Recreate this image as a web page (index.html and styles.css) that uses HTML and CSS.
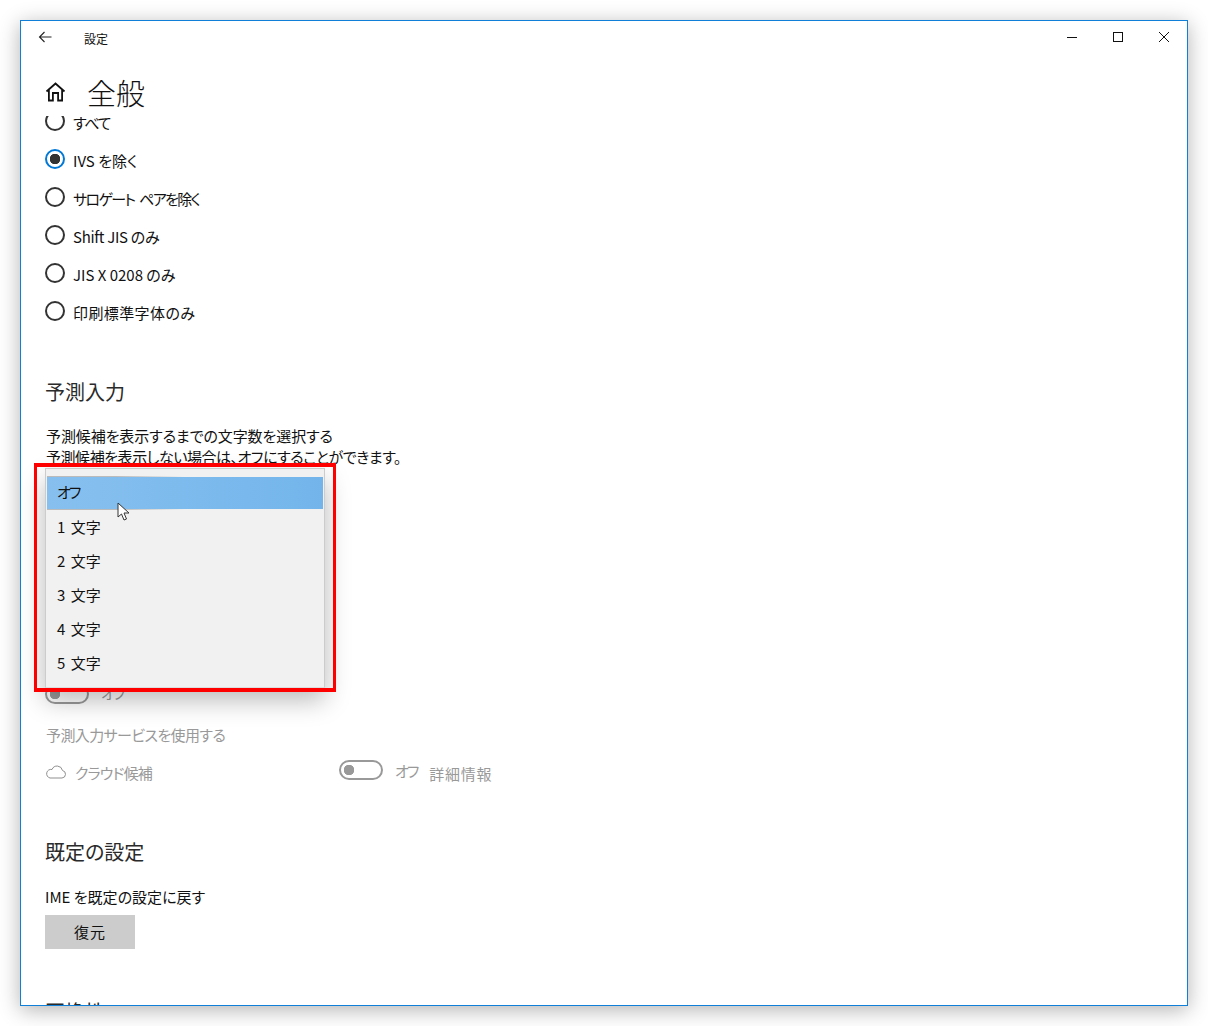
FILE: index.html
```html
<!DOCTYPE html>
<html lang="ja">
  <head>
    <meta charset="UTF-8" />
    <title>設定</title>
    <link rel="stylesheet" href="styles.css">
  </head>

  <body>
    <div class="window">
      <!-- Title Bar -->
      <div class="title-bar">
        <svg class="back-icon" width="14" height="12" viewBox="0 0 14 12">
          <path d="M6.5 1 L1.5 6 L6.5 11 M1.5 6 H13.5" fill="none" stroke="#222" stroke-width="1.1" />
        </svg>
        <span class="title-text">設定</span>
        <div class="window-buttons">
          <div class="window-button"><svg width="12" height="12" viewBox="0 0 12 12"><path d="M1 6.5 H11" stroke="#111" stroke-width="1" /></svg></div>
          <div class="window-button"><svg width="12" height="12" viewBox="0 0 12 12"><rect x="1.5" y="1.5" width="9" height="9" fill="none" stroke="#111" stroke-width="1" /></svg></div>
          <div class="window-button"><svg width="12" height="12" viewBox="0 0 12 12"><path d="M1 1 L11 11 M11 1 L1 11" stroke="#111" stroke-width="1" /></svg></div>
        </div>
      </div>

      <!-- Page Header -->
      <div class="page-header">
        <svg class="home-icon" width="21" height="20" viewBox="0 0 21 20">
          <path d="M1.5 9.5 L10.5 1.5 L19.5 9.5 M3.9 7.5 V18.5 H7.9 V11 H13.1 V18.5 H17.1 V7.5" fill="none" stroke="#111" stroke-width="1.8" />
        </svg>
        <h1>全般</h1>
      </div>

      <!-- Scrolled Settings -->
      <div class="content">
        <div class="content-inner">
          <div class="radio-row"><span class="radio"></span><span class="squeeze-more">すべて</span></div>
          <div class="radio-row"><span class="radio checked"></span>IVS を除く</div>
          <div class="radio-row"><span class="radio"></span><span class="surrogate-text">サロゲート ペアを除く</span></div>
          <div class="radio-row"><span class="radio"></span><span class="squeeze">Shift JIS のみ</span></div>
          <div class="radio-row"><span class="radio"></span>JIS X 0208 のみ</div>
          <div class="radio-row"><span class="radio"></span><span class="widen">印刷標準字体のみ</span></div>

          <h2 class="section-title predict-title">予測入力</h2>
          <p class="description"><span class="squeeze-line">予測候補を表示するまでの文字数を選択する</span><br><span class="tight-line">予測候補を表示しない場合は、オフにすることができます。</span></p>

          <div class="toggle-row disabled">
            <span class="toggle"></span><span class="toggle-label">オフ</span>
          </div>

          <p class="service-label disabled">予測入力サービスを使用する</p>

          <div class="cloud-row disabled">
            <div class="cloud-name">
              <svg width="22" height="14" viewBox="0 0 22 14">
                <path d="M5 13 H17 A3.8 3.8 0 0 0 17.5 5.5 A5.5 5.5 0 0 0 7 4.5 A4.3 4.3 0 0 0 5 13 Z" fill="none" stroke="#8f8f8f" stroke-width="1" />
              </svg>
              <span class="cloud-text">クラウド候補</span>
            </div>
            <span class="toggle"></span><span class="toggle-label">オフ</span>
            <span class="more-info">詳細情報</span>
          </div>

          <h2 class="section-title default-title">既定の設定</h2>
          <p class="reset-label">IME を既定の設定に戻す</p>
          <button class="reset-button">復元</button>

          <h2 class="section-title compat-title">互換性</h2>
        </div>

        <!-- Open Dropdown -->
        <div class="dropdown">
          <div class="option selected"><span class="selected-text">オフ</span></div>
          <div class="option">1 文字</div>
          <div class="option">2 文字</div>
          <div class="option">3 文字</div>
          <div class="option">4 文字</div>
          <div class="option">5 文字</div>
        </div>
      </div>
    </div>

    <!-- Annotation And Pointer -->
    <div class="highlight-box"></div>
    <svg class="cursor" width="14" height="20" viewBox="0 0 14 20">
      <path d="M1 1 V15 L4.5 12 L7 18 L9.5 17 L7 11 H12 Z" fill="#fff" stroke="#333" stroke-width="1" />
    </svg>
  </body>
</html>
```

FILE: styles.css
```css
/* Global Styles */
body {
  margin: 0;
  padding: 20px;
  height: 1026px;
  box-sizing: border-box;
  background-color: #fff;
  color: #111;
  font-family: "Noto Sans CJK JP", "Noto Sans", sans-serif;
  font-size: 15px;
  font-feature-settings: "palt";
  overflow: hidden;
}

/* Window */
.window {
  width: 1168px;
  height: 986px;
  box-sizing: border-box;
  display: flex;
  flex-direction: column;
  background-color: #fff;
  border: 1px solid #0f7fd8;
  box-shadow: 0 4px 20px rgba(0, 0, 0, 0.3);
}

/* Title Bar */
.title-bar {
  height: 36px;
  flex: none;
  display: flex;
  align-items: center;
  padding-left: 17px;
}

.back-icon {
  margin-top: -4px;
}

.title-text {
  margin-left: 32px;
  margin-top: -1px;
  font-size: 12px;
}

.window-buttons {
  margin-left: auto;
  margin-top: -4px;
  display: flex;
}

.window-button {
  width: 46px;
  display: flex;
  justify-content: center;
}

/* Page Header */
.page-header {
  height: 59px;
  box-sizing: border-box;
  padding: 11px 0 0 24px;
  flex: none;
  display: flex;
  align-items: center;
}

h1 {
  margin: 0 0 0 21px;
  font-size: 29px;
  font-weight: 300;
  line-height: 40px;
}

/* Scrolled Content */
.content {
  flex: 1;
  position: relative;
  overflow: hidden;
}

.content-inner {
  margin-top: -13px;
  padding-left: 24px;
}

.radio-row {
  height: 38px;
  display: flex;
  align-items: center;
  gap: 8px;
}

.radio {
  width: 20px;
  height: 20px;
  margin-top: -2px;
  box-sizing: border-box;
  border: 2px solid #333;
  border-radius: 50%;
}

.radio.checked {
  border-color: #0078d7;
  background: radial-gradient(circle, #333 0 5px, transparent 5.5px);
}

/* Per Text Width Fixes */
.squeeze-more {
  letter-spacing: -1.3px;
}

.surrogate-text {
  letter-spacing: -1.65px;
  word-spacing: 3px;
}

.squeeze {
  letter-spacing: -0.3px;
}

.widen {
  letter-spacing: 0.4px;
}

.squeeze-line {
  letter-spacing: -0.1px;
}

.tight-line {
  letter-spacing: -0.45px;
}

.cloud-text {
  letter-spacing: -0.8px;
}

.section-title {
  margin: 0;
  font-size: 20px;
  font-weight: 400;
  color: #2a2a2a;
  line-height: 28px;
}

.predict-title {
  margin-top: 47px;
}

.description {
  margin: 19px 0 0 1px;
  line-height: 21px;
}

/* Toggles */
.disabled {
  color: #999;
}

.toggle-row {
  display: flex;
  align-items: center;
  margin-top: 217px;
  height: 20px;
}

.toggle {
  width: 44px;
  height: 20px;
  box-sizing: border-box;
  border: 2px solid #999;
  border-radius: 10px;
  background: radial-gradient(circle at 8px 8px, #999 0 5px, transparent 5.5px);
}

.cloud-row .toggle {
  margin-top: -4px;
}

.toggle-label {
  margin-left: 12px;
  margin-top: -3px;
  letter-spacing: -2px;
}

.service-label {
  margin: 20px 0 0 1px;
  line-height: 22px;
  letter-spacing: -0.6px;
}

.cloud-row {
  display: flex;
  align-items: center;
  margin-top: 15px;
  height: 22px;
}

.cloud-name {
  width: 294px;
  display: flex;
  align-items: center;
  gap: 8px;
}

.more-info {
  margin-left: 12px;
  margin-top: 2px;
  letter-spacing: 0.7px;
}

.default-title {
  margin-top: 55px;
}

.reset-label {
  margin: 20px 0 0;
  line-height: 22px;
}

/* Button */
.reset-button {
  display: block;
  width: 90px;
  height: 34px;
  margin-top: 7px;
  padding: 0 0 2px;
  border: none;
  background-color: #ccc;
  color: #111;
  font: inherit;
  font-feature-settings: inherit;
  letter-spacing: 1px;
}

.compat-title {
  margin-top: 49px;
}

/* Dropdown */
.dropdown {
  position: absolute;
  left: 24px;
  top: 352px;
  width: 280px;
  height: 220px;
  box-sizing: border-box;
  padding: 8px 1px;
  background-color: #f1f1f1;
  border: 1px solid #ccc;
  border-bottom-color: #ddd;
  box-shadow: 0 12px 24px rgba(0, 0, 0, 0.28);
}

.option {
  height: 34px;
  display: flex;
  align-items: center;
  padding-left: 10px;
  word-spacing: 2px;
}

.option.selected {
  position: relative;
  height: 32px;
  background: linear-gradient(90deg, #87c0ef, #73b5eb);
}

.selected-text {
  margin-top: -3px;
  letter-spacing: -2px;
}

.option.selected::before,
.option.selected::after {
  content: "";
  position: absolute;
  left: 0;
  width: 50%;
  height: 1px;
  background: linear-gradient(90deg, #bbb 50%, transparent);
}

.option.selected::before {
  top: -1px;
}

.option.selected::after {
  bottom: -1px;
}

/* Annotation */
.highlight-box {
  position: absolute;
  left: 34px;
  top: 463px;
  width: 302px;
  height: 229px;
  box-sizing: border-box;
  border: 4px solid #f00;
  border-left-width: 3px;
  border-right-width: 3px;
}

.cursor {
  position: absolute;
  left: 117px;
  top: 502px;
}
```
